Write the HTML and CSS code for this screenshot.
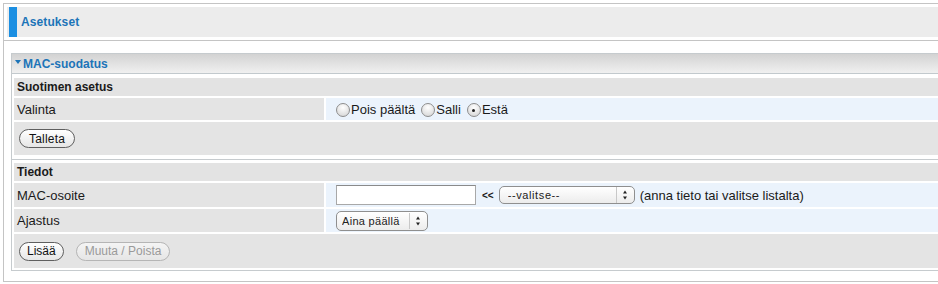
FILE: index.html
```html
<!DOCTYPE html>
<html lang="fi">
<head>
<meta charset="utf-8">
<title>Asetukset</title>
<link rel="stylesheet" href="styles.css">
</head>
<body>
<div class="page">
  <div class="page-head">
    <div class="head-bar">
      <span class="head-mark"></span>
      <span class="head-title">Asetukset</span>
    </div>
  </div>
  <div class="page-body">
    <div class="panel">
      <div class="panel-head"><span class="tri"></span>MAC-suodatus</div>
      <div class="group">
        <div class="row row-title">Suotimen asetus</div>
        <div class="row">
          <div class="cell-label">Valinta</div>
          <div class="cell-value">
            <label class="radio"><span class="dot"></span>Pois päältä</label>
            <label class="radio"><span class="dot"></span>Salli</label>
            <label class="radio"><span class="dot on"></span>Estä</label>
          </div>
        </div>
        <div class="row row-actions">
          <button class="btn btn-save">Talleta</button>
        </div>
      </div>
      <div class="sep"></div>
      <div class="group group-second">
        <div class="row row-title">Tiedot</div>
        <div class="row row-tall">
          <div class="cell-label">MAC-osoite</div>
          <div class="cell-value">
            <input class="text" type="text">
            <span class="arrows">&lt;&lt;</span>
            <select class="sel sel-wide"><option>--valitse--</option></select>
            <span class="hint">(anna tieto tai valitse listalta)</span>
          </div>
        </div>
        <div class="row row-mid">
          <div class="cell-label">Ajastus</div>
          <div class="cell-value">
            <select class="sel sel-short"><option>Aina päällä</option></select>
          </div>
        </div>
        <div class="row row-actions row-actions-tall">
          <button class="btn btn-add">Lisää</button>
          <button class="btn btn-off" disabled>Muuta / Poista</button>
        </div>
      </div>
    </div>
  </div>
</div>
</body>
</html>
```

FILE: styles.css
```css
html, body {
  margin: 0;
  padding: 0;
  overflow: hidden;
  background: #ffffff;
}
body {
  font-family: "Liberation Sans", Arial, sans-serif;
  font-size: 13px;
  color: #1a1a1a;
}
.page {
  margin: 3px 0 0 3px;
  width: 960px;
  height: 279px;
  border: 1px solid #c4c4c4;
  box-sizing: border-box;
}
.page-head {
  padding: 3px 0 3px 3px;
  border-bottom: 1px solid #c4c4c4;
}
.head-bar {
  display: flex;
  align-items: center;
  height: 30px;
  background: #ececec;
  padding-left: 2px;
}
.head-mark {
  width: 8px;
  height: 30px;
  background: #1b8fe2;
}
.head-title {
  margin-left: 4px;
  font-weight: bold;
  color: #1c74b8;
  font-size: 12px;
  letter-spacing: 0.1px;
}
.page-body {
  padding: 12px 0 0 7px;
}
.panel {
  border: 1px solid #c6cbce;
  padding: 0 0 2px 2px;
}
.panel-head {
  margin-left: -2px;
  height: 19px;
  border-bottom: 1px solid #c2c9cd;
  background: linear-gradient(#d3d3d3, #f0f0f0);
  color: #1c74b8;
  font-weight: bold;
  font-size: 12px;
  display: flex;
  align-items: center;
  padding-left: 3px;
}
.tri {
  width: 0;
  height: 0;
  border-left: 3px solid transparent;
  border-right: 3px solid transparent;
  border-top: 4px solid #1c74b8;
  margin-right: 2px;
  margin-top: -3px;
}
.group {
  display: flex;
  flex-direction: column;
  gap: 2px;
  padding-top: 4px;
}
.group-second {
  padding-top: 3px;
}
.row {
  display: flex;
  gap: 2px;
}
.row-title {
  height: 18px;
  background: #e3e3e3;
  font-weight: bold;
  font-size: 12px;
  align-items: center;
  padding-left: 3px;
}
.cell-label {
  width: 307px;
  background: #e4e4e4;
  padding-left: 3px;
  display: flex;
  align-items: center;
  height: 22px;
}
.cell-value {
  flex: 1;
  background: #ebf3fc;
  display: flex;
  align-items: center;
  padding-left: 10px;
  height: 22px;
}
.row-tall .cell-label,
.row-tall .cell-value {
  height: 24px;
}
.row-mid .cell-label,
.row-mid .cell-value {
  height: 23px;
}
.row-actions {
  height: 33px;
  background: #e4e4e4;
  align-items: center;
  padding-left: 5px;
  gap: 12px;
}
.row-actions-tall {
  height: 34px;
}
.sep {
  margin: 4px 0 0 -2px;
  border-top: 1px solid #c6cbce;
}
.radio {
  display: flex;
  align-items: center;
  margin-right: 6px;
}
.dot {
  width: 12px;
  height: 12px;
  border-radius: 50%;
  border: 1px solid #8d8d8d;
  background: radial-gradient(circle at 50% 30%, #ffffff, #d2d2d2);
  margin-right: 1px;
  margin-top: 2px;
  display: flex;
  align-items: center;
  justify-content: center;
}
.dot.on::after {
  content: "";
  width: 3px;
  height: 3px;
  border-radius: 50%;
  background: #222;
}
.text {
  width: 140px;
  height: 20px;
  box-sizing: border-box;
  border: 1px solid #a8a8a8;
  border-top-color: #8a8a8a;
  margin: 0;
  padding: 0 3px;
  font: inherit;
}
.arrows {
  font-weight: bold;
  font-size: 10px;
  margin: 0 5px 0 6px;
}
.sel {
  -webkit-appearance: none;
  appearance: none;
  height: 18px;
  box-sizing: border-box;
  border: 1px solid #8f8f8f;
  border-radius: 5px;
  font-family: "Liberation Sans", Arial, sans-serif;
  font-size: 11px;
  color: #222;
  padding: 0 20px 0 8px;
  margin: 0;
  background:
    url("data:image/svg+xml;utf8,<svg xmlns='http://www.w3.org/2000/svg' width='18' height='16'><line x1='0.5' y1='0' x2='0.5' y2='16' stroke='%23c8c8c8'/><path d='M7 6.5 L9 3.5 L11 6.5 Z M7 9.5 L9 12.5 L11 9.5 Z' fill='%23222'/></svg>") no-repeat right center,
    linear-gradient(#ffffff, #ececec);
}
.sel-wide {
  width: 136px;
  letter-spacing: 0.6px;
}
.sel-short {
  width: 92px;
  height: 20px;
  padding-left: 5px;
  letter-spacing: 0.3px;
}
.hint {
  margin-left: 5px;
}
.btn {
  height: 19px;
  border: 1px solid #5f5f5f;
  border-radius: 10px;
  background: linear-gradient(#ffffff, #e6e6e6);
  font-family: "Liberation Sans", Arial, sans-serif;
  font-size: 12px;
  color: #111;
  padding: 0 8px;
  margin: 0;
}
.btn-save {
  padding: 0 9px;
  letter-spacing: 0.2px;
}
.btn-add {
  padding: 0 7px;
}
.btn-off {
  color: #9a9a9a;
  border-color: #b5b5b5;
  background: linear-gradient(#f4f4f4, #e6e6e6);
}
```
